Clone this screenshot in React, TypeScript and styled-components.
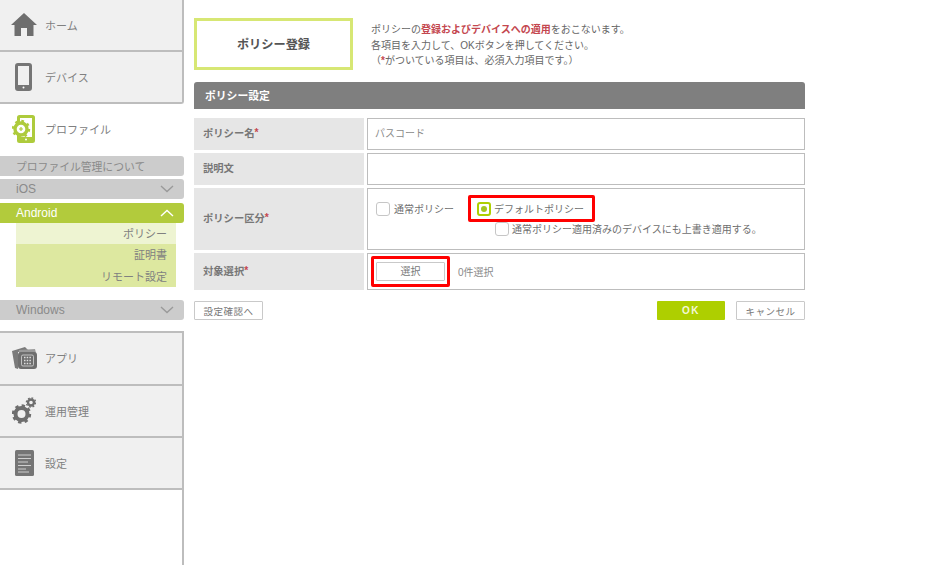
import { ReactNode } from 'react';
import styled, { createGlobalStyle } from 'styled-components';

const GlobalStyle = createGlobalStyle`
  html, body {
    margin: 0;
    padding: 0;
    background: #fff;
    font-family: "Liberation Sans", "Noto Sans CJK JP", sans-serif;
  }
`;

const HomeIcon = () => (
  <svg width="28" height="26" viewBox="0 0 28 26">
    <path d="M14 1 L27 13 L23.5 13 L23.5 24 L17 24 L17 16 L11 16 L11 24 L4.5 24 L4.5 13 L1 13 Z" fill="#6e6e6e" />
  </svg>
);

const DeviceIcon = () => (
  <svg width="18" height="28" viewBox="0 0 18 28">
    <rect x="1.5" y="1.5" width="14" height="25" rx="1.5" fill="none" stroke="#757575" strokeWidth="3" />
    <rect x="1" y="22" width="15" height="5" fill="#757575" />
    <circle cx="8.5" cy="24.5" r="1" fill="#fff" />
  </svg>
);

const ProfileIcon = () => (
  <svg width="24" height="28" viewBox="0 0 24 28">
    <rect x="6.5" y="1.5" width="15" height="25" rx="1" fill="#fff" stroke="#aecb3c" strokeWidth="3" />
    <rect x="6" y="22" width="16" height="5" fill="#aecb3c" />
    <circle cx="14" cy="24.5" r="1" fill="#fff" />
    <circle cx="9" cy="14" r="6" fill="#fff" stroke="#aecb3c" strokeWidth="3.4" />
    <circle cx="9" cy="14" r="8" fill="none" stroke="#aecb3c" strokeWidth="2.4" strokeDasharray="2.6 3.7" />
    <path d="M7 14h4M9 12v4" stroke="#aecb3c" strokeWidth="1.2" />
  </svg>
);

const AppIcon = () => (
  <svg width="27" height="24" viewBox="0 0 27 24">
    <path d="M1 5 L14 1 L18 5 L7 6 L7 23 L4 22 Z" fill="#7a7a7a" />
    <path d="M8 4 L24 3 L25 7 L8 7 Z" fill="#9a9a9a" />
    <rect x="7" y="6" width="19" height="17" rx="3" fill="#6e6e6e" />
    <rect x="10.5" y="9" width="12" height="11" rx="1.5" fill="none" stroke="#d8d8d8" strokeWidth="0.8" />
    <path d="M13 11.5h7M13 14.5h7M13 17.5h7" stroke="#e0e0e0" strokeWidth="1.5" strokeDasharray="1.5 1.2" />
  </svg>
);

const GearsIcon = () => (
  <svg width="24" height="27" viewBox="0 0 24 27">
    <circle cx="9.5" cy="17" r="6" fill="none" stroke="#6e6e6e" strokeWidth="4" />
    <circle cx="9.5" cy="17" r="8.3" fill="none" stroke="#6e6e6e" strokeWidth="2.8" strokeDasharray="3.3 3.2" />
    <circle cx="19" cy="5.5" r="3" fill="none" stroke="#6e6e6e" strokeWidth="2.4" />
    <circle cx="19" cy="5.5" r="4.6" fill="none" stroke="#6e6e6e" strokeWidth="1.4" strokeDasharray="1.8 1.8" />
  </svg>
);

const SettingIcon = () => (
  <svg width="19" height="26" viewBox="0 0 19 26">
    <rect width="19" height="26" rx="1.5" fill="#757575" />
    <path d="M3 5h13M3 8.5h13M3 12h10M3 15.5h13M3 19h8M3 22h11" stroke="#cfcfcf" strokeWidth="1" />
  </svg>
);

const Chevron = ({ up, color }: { up?: boolean; color: string }) => (
  <svg width="14" height="8" viewBox="0 0 14 8">
    <path d={up ? 'M1 7 L7 1.5 L13 7' : 'M1 1 L7 6.5 L13 1'} fill="none" stroke={color} strokeWidth="1.4" />
  </svg>
);

const Page = styled.div`
  display: flex;
  width: 933px;
  height: 565px;
  overflow: hidden;
`;

const Sidebar = styled.nav`
  width: 184px;
  flex-shrink: 0;
  display: flex;
  flex-direction: column;
`;

const NavItem = styled.div<{ $height?: number; $top?: boolean; $round?: boolean }>`
  display: flex;
  align-items: center;
  box-sizing: border-box;
  height: ${({ $height }) => $height ?? 52}px;
  background: #f0f0f0;
  border-right: 2px solid #bdbdbd;
  border-bottom: 2px solid #bdbdbd;
  border-top: ${({ $top }) => ($top ? '2px solid #bdbdbd' : 'none')};
  border-radius: ${({ $round }) => ($round ? '0 0 3px 0' : '0')};
  color: #808080;
  font-size: 11px;
`;

const ActiveNavItem = styled.div`
  display: flex;
  align-items: center;
  height: 50px;
  margin-bottom: 2px;
  color: #808080;
  font-size: 11px;
`;

const NavIcon = styled.span`
  width: 45px;
  flex-shrink: 0;
  display: flex;
  justify-content: center;
  padding-left: 3px;
  box-sizing: border-box;
`;

const SidebarRest = styled.div`
  flex: 1;
  border-right: 2px solid #bdbdbd;
`;

const SubBar = styled.div<{ $open?: boolean; $mb: number; $latin?: boolean }>`
  display: flex;
  align-items: center;
  justify-content: space-between;
  box-sizing: border-box;
  height: 20px;
  margin-bottom: ${({ $mb }) => $mb}px;
  padding: 0 10px ${({ $latin }) => ($latin ? 0 : 1)}px 16px;
  border-radius: 0 3px 3px 0;
  background: ${({ $open }) => ($open ? '#b2cb3c' : '#cccccc')};
  color: ${({ $open }) => ($open ? '#fff' : '#8a8a8a')};
  font-size: ${({ $latin }) => ($latin ? 12 : 10.8)}px;
`;

const SubList = styled.div`
  margin: 0 8px 13px 16px;
  background: #dde8a0;
`;

const SubItem = styled.div<{ $current?: boolean }>`
  box-sizing: border-box;
  height: 21.33px;
  display: flex;
  align-items: center;
  justify-content: flex-end;
  padding: 0 9px 1px 0;
  font-size: 11px;
  color: #808080;
  background: ${({ $current }) => ($current ? '#eef4d2' : 'transparent')};
`;

const Main = styled.main`
  width: 611px;
  margin-left: 10px;
  padding-top: 18px;
`;

const Head = styled.header`
  display: flex;
  align-items: flex-start;
  gap: 18px;
  margin-bottom: 12px;
`;

const TitleBox = styled.h1`
  box-sizing: border-box;
  width: 159px;
  height: 52px;
  margin: 0;
  display: flex;
  align-items: center;
  justify-content: center;
  border: 3px solid #d7e774;
  color: #555;
  font-size: 12.2px;
  font-weight: 700;
`;

const Desc = styled.p`
  margin: 0;
  padding-top: 4px;
  font-size: 10px;
  line-height: 15.5px;
  color: #666;
  white-space: nowrap;
`;

const Req = styled.b`
  color: #c4474f;
`;

const SectionBar = styled.div`
  box-sizing: border-box;
  height: 27px;
  display: flex;
  align-items: center;
  padding: 0 0 2px 11px;
  margin-bottom: 9px;
  background: #7f7f7f;
  border-radius: 3px 3px 0 0;
  color: #fff;
  font-size: 10.8px;
  font-weight: 700;
`;

const FormRow = styled.div<{ $height: number }>`
  display: grid;
  grid-template-columns: 170px 438px;
  column-gap: 3px;
  height: ${({ $height }) => $height}px;
  margin-bottom: 3px;
`;

const Label = styled.div`
  box-sizing: border-box;
  background: #e6e6e6;
  display: flex;
  align-items: center;
  padding: 0 0 3px 9px;
  font-size: 10.3px;
  font-weight: 700;
  color: #777;
`;

const Value = styled.div`
  box-sizing: border-box;
  border: 1px solid #bdbdbd;
  display: flex;
  align-items: center;
  padding: 0 0 0 7px;
  font-size: 10px;
  color: #8a8a8a;
`;

const NameValue = styled(Value)`
  padding-bottom: 4px;
`;

const ChoiceValue = styled(Value)`
  display: block;
  padding: 6px 0 0 8px;
`;

const ChoiceLine = styled.div`
  display: flex;
  align-items: center;
`;

const Box = styled.span<{ $on?: boolean; $gap?: number }>`
  box-sizing: border-box;
  width: 14px;
  height: 14px;
  flex-shrink: 0;
  margin-right: ${({ $gap }) => $gap ?? 3}px;
  border-radius: 3px;
  border: ${({ $on }) => ($on ? '2px solid #aecf00' : '1.5px solid #c6c6c6')};
  display: flex;
  align-items: center;
  justify-content: center;
  &::after {
    content: '';
    display: ${({ $on }) => ($on ? 'block' : 'none')};
    width: 6px;
    height: 6px;
    border-radius: 50%;
    background: #a4c520;
  }
`;

const Choice = styled.label`
  display: flex;
  align-items: center;
  color: #6e6e6e;
  font-size: 10px;
  white-space: nowrap;
`;

const Highlight = styled.div`
  box-sizing: border-box;
  border: 3px solid #ff0000;
  border-radius: 2px;
  display: flex;
  align-items: center;
`;

const DefaultHighlight = styled(Highlight)`
  width: 127px;
  height: 27px;
  margin-left: 14px;
  padding-left: 6px;
`;

const SelectHighlight = styled(Highlight)`
  width: 79px;
  height: 31px;
  margin-right: 8px;
  margin-left: -4px;
  justify-content: center;
`;

const OverwriteLine = styled.div`
  margin: -1px 0 0 119px;
`;

const Btn = styled.button<{ $w: number; $primary?: boolean }>`
  box-sizing: border-box;
  width: ${({ $w }) => $w}px;
  height: 19px;
  padding: 0;
  font-family: inherit;
  font-size: ${({ $primary }) => ($primary ? 10 : 9.5)}px;
  letter-spacing: ${({ $primary }) => ($primary ? '1.5px' : '0.5px')};
  font-weight: ${({ $primary }) => ($primary ? 700 : 400)};
  color: ${({ $primary }) => ($primary ? '#f4f8d8' : '#777')};
  background: ${({ $primary }) => ($primary ? '#aecf00' : '#fff')};
  border: ${({ $primary }) => ($primary ? 'none' : '1px solid #c9c9c9')};
  border-radius: 1px;
`;

const SelectBtn = styled(Btn)`
  height: 19px;
  padding-bottom: 2px;
  font-size: 10px;
  letter-spacing: 0;
`;

const Actions = styled.div`
  display: flex;
  align-items: center;
  margin-top: 11px;
  width: 611px;
`;

const ActionsRight = styled.div`
  margin-left: auto;
  display: flex;
  gap: 11px;
`;

const Row = ({ label, required, height, children }: { label: string; required?: boolean; height: number; children: ReactNode }) => (
  <FormRow $height={height}>
    <Label>{label}{required && <Req>*</Req>}</Label>
    {children}
  </FormRow>
);

export default function App() {
  return (
    <Page>
      <GlobalStyle />
      <Sidebar>
        <NavItem><NavIcon><HomeIcon /></NavIcon>ホーム</NavItem>
        <NavItem $round><NavIcon><DeviceIcon /></NavIcon>デバイス</NavItem>
        <ActiveNavItem><NavIcon><ProfileIcon /></NavIcon>プロファイル</ActiveNavItem>
        <SubBar $mb={3}>プロファイル管理について</SubBar>
        <SubBar $mb={4} $latin>iOS<Chevron color="#9a9a9a" /></SubBar>
        <SubBar $open $mb={0} $latin>Android<Chevron up color="#fff" /></SubBar>
        <SubList>
          <SubItem $current>ポリシー</SubItem>
          <SubItem>証明書</SubItem>
          <SubItem>リモート設定</SubItem>
        </SubList>
        <SubBar $mb={11} $latin>Windows<Chevron color="#9a9a9a" /></SubBar>
        <NavItem $height={55} $top><NavIcon><AppIcon /></NavIcon>アプリ</NavItem>
        <NavItem><NavIcon><GearsIcon /></NavIcon>運用管理</NavItem>
        <NavItem><NavIcon><SettingIcon /></NavIcon>設定</NavItem>
        <SidebarRest />
      </Sidebar>
      <Main>
        <Head>
          <TitleBox>ポリシー登録</TitleBox>
          <Desc>
            ポリシーの<Req>登録およびデバイスへの適用</Req>をおこないます。<br />
            各項目を入力して、OKボタンを押してください。<br />
            （<Req>*</Req>がついている項目は、必須入力項目です。）
          </Desc>
        </Head>
        <SectionBar>ポリシー設定</SectionBar>
        <Row label="ポリシー名" required height={32}><NameValue>パスコード</NameValue></Row>
        <Row label="説明文" height={32}><Value /></Row>
        <Row label="ポリシー区分" required height={62}>
          <ChoiceValue>
            <ChoiceLine>
              <Choice><Box $gap={4} />通常ポリシー</Choice>
              <DefaultHighlight>
                <Choice><Box $on />デフォルトポリシー</Choice>
              </DefaultHighlight>
            </ChoiceLine>
            <OverwriteLine>
              <Choice><Box />通常ポリシー適用済みのデバイスにも上書き適用する。</Choice>
            </OverwriteLine>
          </ChoiceValue>
        </Row>
        <Row label="対象選択" required height={37}>
          <Value>
            <SelectHighlight><SelectBtn $w={69}>選択</SelectBtn></SelectHighlight>
            0件選択
          </Value>
        </Row>
        <Actions>
          <Btn $w={69}>設定確認へ</Btn>
          <ActionsRight>
            <Btn $w={68} $primary>OK</Btn>
            <Btn $w={69}>キャンセル</Btn>
          </ActionsRight>
        </Actions>
      </Main>
    </Page>
  );
}
